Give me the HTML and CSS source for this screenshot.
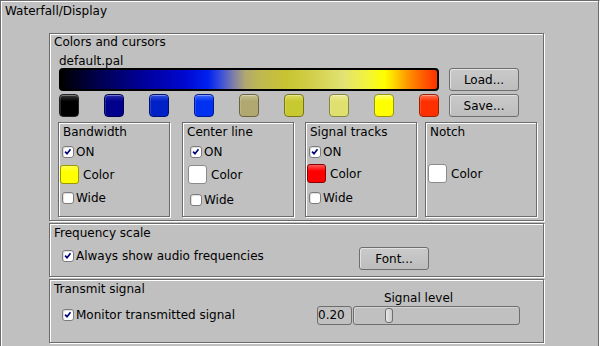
FILE: index.html
```html
<!DOCTYPE html>
<html>
<head>
<meta charset="utf-8">
<link rel="stylesheet" href="styles.css">
</head>
<body>
<div class="window">
  <div class="title">Waterfall/Display</div>
  <div class="groups">
    <section class="group colors">
      <div class="glabel">Colors and cursors</div>
      <div class="palname">default.pal</div>
      <div class="palette">
        <div class="palette-left">
          <div class="gradient"></div>
          <div class="swatches">
            <span class="swatch sw1"></span>
            <span class="swatch sw2"></span>
            <span class="swatch sw3"></span>
            <span class="swatch sw4"></span>
            <span class="swatch sw5"></span>
            <span class="swatch sw6"></span>
            <span class="swatch sw7"></span>
            <span class="swatch sw8"></span>
            <span class="swatch sw9"></span>
          </div>
        </div>
        <div class="palette-buttons">
          <button class="btn">Load...</button>
          <button class="btn">Save...</button>
        </div>
      </div>
      <div class="subgroups">
        <div class="group sub">
          <div class="glabel">Bandwidth</div>
          <div class="row row-on check"><span class="box checked"><svg viewBox="0 0 12 12" width="10" height="10"><polyline points="2.5,5.5 4.8,8 9,2.8" fill="none" stroke="#00007a" stroke-width="2"/></svg></span>ON</div>
          <div class="row row-color"><span class="cbtn c-yellow"></span>Color</div>
          <div class="row row-wide check"><span class="box"></span>Wide</div>
        </div>
        <div class="group sub sub-center">
          <div class="glabel">Center line</div>
          <div class="row row-on check"><span class="box checked"><svg viewBox="0 0 12 12" width="10" height="10"><polyline points="2.5,5.5 4.8,8 9,2.8" fill="none" stroke="#00007a" stroke-width="2"/></svg></span>ON</div>
          <div class="row row-color"><span class="cbtn c-white"></span>Color</div>
          <div class="row row-wide check"><span class="box"></span>Wide</div>
        </div>
        <div class="group sub sub-signal">
          <div class="glabel">Signal tracks</div>
          <div class="row row-on check"><span class="box checked"><svg viewBox="0 0 12 12" width="10" height="10"><polyline points="2.5,5.5 4.8,8 9,2.8" fill="none" stroke="#00007a" stroke-width="2"/></svg></span>ON</div>
          <div class="row row-color row-up"><span class="cbtn c-red"></span>Color</div>
          <div class="row row-wide check"><span class="box"></span>Wide</div>
        </div>
        <div class="group sub sub-notch">
          <div class="glabel">Notch</div>
          <div class="row row-on"></div>
          <div class="row row-color row-up"><span class="cbtn c-white"></span>Color</div>
        </div>
      </div>
    </section>
    <section class="group freq">
      <div class="glabel">Frequency scale</div>
      <div class="freq-row">
        <div class="check freq-check"><span class="box checked"><svg viewBox="0 0 12 12" width="10" height="10"><polyline points="2.5,5.5 4.8,8 9,2.8" fill="none" stroke="#00007a" stroke-width="2"/></svg></span>Always show audio frequencies</div>
        <button class="btn">Font...</button>
      </div>
    </section>
    <section class="group tx">
      <div class="tx-left">
        <div class="glabel">Transmit signal</div>
        <div class="check tx-check"><span class="box checked"><svg viewBox="0 0 12 12" width="10" height="10"><polyline points="2.5,5.5 4.8,8 9,2.8" fill="none" stroke="#00007a" stroke-width="2"/></svg></span>Monitor transmitted signal</div>
      </div>
      <div class="level">
        <div class="level-label">Signal level</div>
        <div class="level-row">
          <div class="value">0.20</div>
          <div class="slider"><span class="thumb"></span></div>
        </div>
      </div>
    </section>
  </div>
</div>
</body>
</html>
```
FILE: styles.css
```css
html, body {
  margin: 0;
  padding: 0;
}
body {
  width: 600px;
  height: 346px;
  overflow: hidden;
  background: #c0c0c0;
  font-family: "DejaVu Sans", sans-serif;
  font-size: 12px;
  color: #000;
}
.window {
  width: 599px;
  height: 352px;
  box-sizing: border-box;
  border: 1px solid #6b6b6b;
  box-shadow: inset 1px 1px 0 #fff, 1px 1px 0 #fff;
  padding: 3px 0 0 4px;
}
.title {
  line-height: 14px;
  height: 14px;
}
.groups {
  margin: 15px 0 0 44px;
  width: 495px;
  display: flex;
  flex-direction: column;
  gap: 2px;
}
.group {
  box-sizing: border-box;
  border: 1px solid #6b6b6b;
  box-shadow: inset 1px 1px 0 #fff, 1px 1px 0 #fff;
}
.glabel {
  line-height: 14px;
  height: 14px;
  white-space: nowrap;
}
.colors {
  height: 188px;
  padding: 1px 0 0 4px;
}
.palname {
  margin: 5px 0 0 5px;
  line-height: 14px;
  height: 14px;
}
.palette {
  display: flex;
  margin-left: 5px;
}
.palette-left {
  width: 380px;
  display: flex;
  flex-direction: column;
  gap: 3px;
}
.gradient {
  height: 23px;
  box-sizing: border-box;
  border: 2px solid #000;
  border-radius: 4px;
  background: linear-gradient(to right,
    #000000 0%, #000050 10%, #00009a 22%, #0008d0 33%, #0020f0 39%,
    #3048e0 42%, #8080a8 46%, #b0a870 49%, #c0b850 53%, #c8c430 60%,
    #d4d250 68%, #e2e274 75%, #f2f240 81%, #ffff00 86%, #ffd000 89%,
    #ff9800 92%, #ff6000 96%, #ff3000 100%);
}
.swatches {
  height: 23px;
  display: flex;
  justify-content: space-between;
}
.swatch {
  width: 20px;
  height: 23px;
  box-sizing: border-box;
  border-radius: 4px;
  border: 1px solid rgba(0, 0, 0, 0.55);
  box-shadow: inset 0 1px 0 rgba(255, 255, 255, 0.35), inset 1px 0 0 rgba(255, 255, 255, 0.15);
}
.sw1 { background: linear-gradient(#3a3a3a, #000 30%); border-color: #222; }
.sw2 { background: linear-gradient(#2a2ab0, #00008c 30%); border-color: #000050; }
.sw3 { background: linear-gradient(#3050e0, #0020c8 30%); border-color: #001070; }
.sw4 { background: linear-gradient(#4068ff, #0030f0 30%); border-color: #001890; }
.sw5 { background: linear-gradient(#c8c090, #b0a870 30%); border-color: #6a6440; }
.sw6 { background: linear-gradient(#dcdc60, #c8c830 30%); border-color: #77771a; }
.sw7 { background: linear-gradient(#ecec98, #e0e070 30%); border-color: #868640; }
.sw8 { background: linear-gradient(#ffff70, #ffff00 30%); border-color: #999900; }
.sw9 { background: linear-gradient(#ff7050, #ff3000 30%); border-color: #992000; }
.palette-buttons {
  margin-left: 10px;
  display: flex;
  flex-direction: column;
  gap: 3px;
}
.btn {
  width: 70px;
  height: 23px;
  box-sizing: border-box;
  padding: 0;
  margin: 0;
  font: inherit;
  color: #000;
  background: linear-gradient(#cacaca, #bdbdbd);
  border: 1px solid #6e6e6e;
  border-radius: 3px;
  box-shadow: inset 1px 1px 0 #e2e2e2;
  text-align: center;
  line-height: 20px;
}
.subgroups {
  display: flex;
  margin: 5px 0 0 4px;
}
.sub {
  width: 112px;
  height: 95px;
  padding: 2px 0 0 4px;
}
.sub-center { margin-left: 12px; }
.sub-signal { margin-left: 11px; }
.sub-notch { margin-left: 8px; }
.row {
  display: flex;
  align-items: center;
  white-space: nowrap;
  line-height: 14px;
}
.row-on {
  margin: 6px 0 0 -1px;
  height: 14px;
}
.row-color {
  margin: 6px 0 0 -3px;
  height: 19px;
}
.row-up {
  margin-top: 5px;
  margin-left: -2px;
}
.row-wide {
  margin: 7px 0 0 -1px;
  height: 14px;
}
.sub-center .row-on { margin-left: 3px; }
.sub-center .row-color { margin-left: 1px; }
.sub-center .row-wide { margin: 9px 0 0 3px; }
.sub-signal .row-color { margin-left: -3px; margin-top: 5px; }
.sub-signal .row-wide { margin-top: 8px; }
.check {
  display: flex;
  align-items: center;
  line-height: 14px;
  white-space: nowrap;
}
.box {
  width: 12px;
  height: 12px;
  box-sizing: border-box;
  border: 1px solid #7c7c7c;
  border-radius: 3px;
  background: #fff;
  box-shadow: inset 1px 1px 0 #e0e0e0;
  margin-right: 2px;
  display: flex;
  align-items: center;
  justify-content: center;
  flex: none;
}
.cbtn {
  width: 19px;
  height: 19px;
  box-sizing: border-box;
  border-radius: 3px;
  border: 1px solid;
  margin-right: 4px;
  flex: none;
}
.c-yellow { background: linear-gradient(#ffff50, #ffff00 35%); border-color: #9a9a00; }
.c-white { background: #fff; border-color: #8a8a8a; }
.c-red { background: linear-gradient(#ff5a5a, #ff0000 35%); border-color: #8a0000; }
.freq {
  height: 54px;
  padding: 2px 0 0 4px;
}
.freq-row {
  display: flex;
  margin-top: 7px;
}
.freq-check {
  margin: 2px 0 0 8px;
  width: 297px;
  height: 14px;
  flex: none;
}
.tx {
  height: 64px;
  padding: 2px 0 0 4px;
  display: flex;
}
.tx-left {
  width: 263px;
  flex: none;
}
.tx-check {
  margin: 12px 0 0 8px;
}
.level {
  margin-top: 9px;
  width: 203px;
}
.level-label {
  text-align: center;
  line-height: 14px;
  height: 14px;
}
.level-row {
  display: flex;
  margin-top: 1px;
}
.value {
  width: 35px;
  height: 19px;
  box-sizing: border-box;
  border: 1px solid #6e6e6e;
  border-radius: 3px;
  line-height: 17px;
  padding-left: 0;
}
.slider {
  width: 167px;
  height: 19px;
  margin-left: 1px;
  box-sizing: border-box;
  border: 1px solid #6e6e6e;
  border-radius: 3px;
  box-shadow: inset 1px 1px 0 #d4d4d4;
  padding-left: 31px;
  display: flex;
  align-items: center;
}
.thumb {
  width: 8px;
  height: 15px;
  box-sizing: border-box;
  border: 1px solid #6e6e6e;
  border-radius: 3px;
  background: linear-gradient(to right, #e8e8e8, #c8c8c8);
}
```
